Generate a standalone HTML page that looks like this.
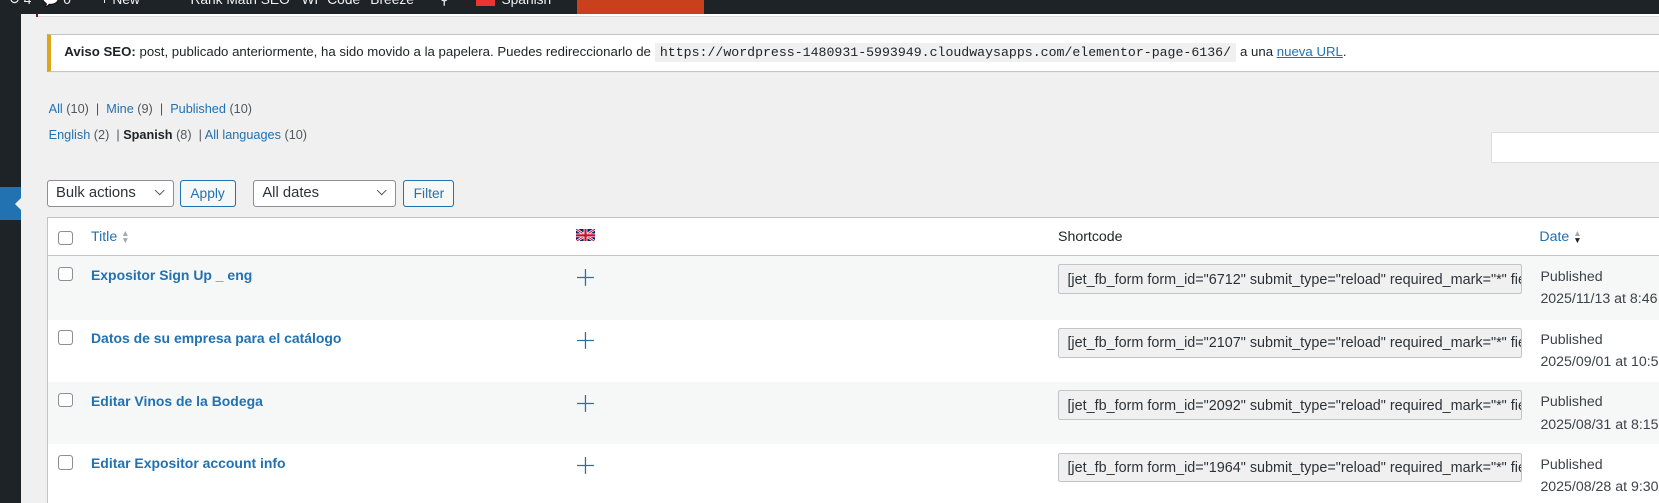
<!DOCTYPE html>
<html><head><meta charset="utf-8"><style>
*{box-sizing:border-box;margin:0;padding:0}
html,body{width:1659px;height:503px;overflow:hidden;background:#f0f0f1}
#wrap{zoom:1.058;width:1568px;height:475px;position:relative;overflow:hidden;font-family:"Liberation Sans",sans-serif;font-size:13px;color:#3c434a}
.abs{position:absolute}
a{color:#2271b1;text-decoration:none}
#bar{left:0;top:0;width:1659px;height:13px;background:#1d2327;overflow:hidden;color:#f0f0f1;font-size:13px}
#bar span{position:absolute;top:-8px;white-space:nowrap}
#side{left:0;top:13px;width:20px;height:462px;background:#1d2327}
.notice{left:44px;top:32px;width:1630px;height:36px;background:#fff;border:1px solid #c3c4c7;border-left:4px solid #dba617;box-shadow:0 1px 1px rgba(0,0,0,.04);padding:9px 12px 0 13px;font-size:12.5px;color:#1d2327;white-space:nowrap}
code{font-family:"Liberation Mono",monospace;background:#f0f0f1;padding:2px 5px;font-size:12.5px}
.sel{height:26px;border:1px solid #8c8f94;border-radius:3px;background:#fff;font-size:14px;color:#2c3338;padding:4px 8px}
.btn{height:26px;border:1px solid #2271b1;border-radius:3px;background:#f6f7f7;color:#2271b1;font-size:13px;padding:5px 9px}
.chev{position:absolute;right:9px;top:6px;width:7px;height:7px;border-right:1.3px solid #50575e;border-bottom:1.3px solid #50575e;transform:rotate(45deg)}
.cb{width:14px;height:14px;border:1px solid #8c8f94;border-radius:3px;background:#fff;position:absolute}
.row{position:absolute;left:45px;width:1614px;height:60px}
.t{position:absolute;left:41px;top:10px;font-weight:bold;color:#2271b1;font-size:13.2px}
.plus{position:absolute;left:500px;top:12px}
.sc{position:absolute;left:955px;top:8px;width:439px;height:28px;background:#f0f0f1;border:1px solid #c3c4c7;border-radius:2px;padding:6px 8px;font-size:13.6px;color:#2c3338;white-space:nowrap;overflow:hidden}
.dt{position:absolute;left:1411px;top:9px;font-size:13.4px;line-height:21px;color:#3c434a;white-space:nowrap}
</style></head><body><div id="wrap">
<div id="bar" class="abs">
<span style="left:8px">↻ 4</span><span style="left:40px">💬 0</span><span style="left:95px">+ New</span><span style="left:180px">Rank Math SEO</span><span style="left:285px">WP Code</span><span style="left:350px">Breeze</span><span style="left:415px">⚲</span>
<span style="left:450px;top:-6px;width:18px;height:12px;background:#e33"></span><span style="left:474px">Spanish</span>
<span style="left:545px;top:0;width:120px;height:13px;background:#c9401d"></span>
</div>
<div id="side" class="abs"></div>
<div class="abs" style="left:0;top:177px;width:20px;height:31px;background:#2271b1"></div>
<div class="abs" style="left:14px;top:187px;width:0;height:0;border-top:6px solid transparent;border-bottom:6px solid transparent;border-right:6px solid #f0f0f1"></div>
<div class="abs" style="left:34px;top:13px;width:2px;height:3px;background:#8a0b3a"></div>
<div class="abs" style="left:36px;top:13px;width:1630px;height:3px;background:#fff;border-bottom:1px solid #dcdcde"></div>
<div class="abs notice"><b>Aviso SEO:</b> post, publicado anteriormente, ha sido movido a la papelera. Puedes redireccionarlo de <code>https://wordpress-1480931-5993949.cloudwaysapps.com/elementor-page-6136/</code> a una <a href="#" style="text-decoration:underline">nueva URL</a>.</div>
<div class="abs" style="left:46px;top:96px;font-size:12px;color:#50575e"><a>All</a> (10) &nbsp;| &nbsp;<a>Mine</a> (9) &nbsp;| &nbsp;<a>Published</a> (10)</div>
<div class="abs" style="left:46px;top:121px;font-size:12px;color:#50575e"><a>English</a> (2) &nbsp;| <b style="color:#1d2327">Spanish</b> (8) &nbsp;| <a>All languages</a> (10)</div>
<div class="abs" style="left:1409px;top:125px;width:260px;height:29px;background:#fff;border:1px solid #dcdcde;border-radius:2px"></div>
<div class="abs sel" style="left:44px;top:170px;width:120px">Bulk actions<div class="chev"></div></div>
<div class="abs btn" style="left:170px;top:170px;width:53px">Apply</div>
<div class="abs sel" style="left:239px;top:170px;width:135px">All dates<div class="chev"></div></div>
<div class="abs btn" style="left:381px;top:170px;width:48px">Filter</div>
<div class="abs" style="left:44px;top:205px;width:1640px;height:290px;background:#fff;border:1px solid #c3c4c7"></div>
<div class="abs" style="left:45px;top:241px;width:1614px;height:1px;background:#c3c4c7"></div>
<div class="cb" style="left:55px;top:218px"></div>
<div class="abs" style="left:86px;top:216px;color:#2271b1;font-size:13.4px">Title <span style="color:#a7aaad;font-size:8px;display:inline-block;line-height:6px;vertical-align:middle">▲<br>▼</span></div>
<svg class="abs" style="left:544px;top:216px" width="18" height="12" viewBox="0 0 60 40"><rect width="60" height="40" fill="#012169"/><path d="M0,0 60,40M60,0 0,40" stroke="#fff" stroke-width="8"/><path d="M0,0 60,40M60,0 0,40" stroke="#C8102E" stroke-width="3"/><path d="M30,0v40M0,20h60" stroke="#fff" stroke-width="12"/><path d="M30,0v40M0,20h60" stroke="#C8102E" stroke-width="7"/></svg>
<div class="abs" style="left:1000px;top:216px;color:#1d2327;font-size:13.4px">Shortcode</div>
<div class="abs" style="left:1455px;top:216px;color:#2271b1;font-size:13.4px">Date <span style="font-size:8px;display:inline-block;line-height:6px;vertical-align:middle"><span style="color:#a7aaad">▲</span><br><span style="color:#1d2327">▼</span></span></div>

<div class="row" style="top:242px;background:#f6f7f7"><div class="cb" style="left:10px;top:10px"></div><div class="t">Expositor Sign Up _ eng</div><svg class="plus" width="16" height="16"><path d="M8 0v16M0 8h16" stroke="#2271b1" stroke-width="1.2"/></svg><div class="sc">[jet_fb_form form_id="6712" submit_type="reload" required_mark="*" fields_layout="column"]</div><div class="dt">Published<br>2025/11/13 at 8:46 am</div></div>
<div class="row" style="top:302px;background:#fff"><div class="cb" style="left:10px;top:10px"></div><div class="t">Datos de su empresa para el catálogo</div><svg class="plus" width="16" height="16"><path d="M8 0v16M0 8h16" stroke="#2271b1" stroke-width="1.2"/></svg><div class="sc">[jet_fb_form form_id="2107" submit_type="reload" required_mark="*" fields_layout="column"]</div><div class="dt">Published<br>2025/09/01 at 10:55 am</div></div>
<div class="row" style="top:361px;background:#f6f7f7"><div class="cb" style="left:10px;top:10px"></div><div class="t">Editar Vinos de la Bodega</div><svg class="plus" width="16" height="16"><path d="M8 0v16M0 8h16" stroke="#2271b1" stroke-width="1.2"/></svg><div class="sc">[jet_fb_form form_id="2092" submit_type="reload" required_mark="*" fields_layout="column"]</div><div class="dt">Published<br>2025/08/31 at 8:15 pm</div></div>
<div class="row" style="top:420px;background:#fff"><div class="cb" style="left:10px;top:10px"></div><div class="t">Editar Expositor account info</div><svg class="plus" width="16" height="16"><path d="M8 0v16M0 8h16" stroke="#2271b1" stroke-width="1.2"/></svg><div class="sc">[jet_fb_form form_id="1964" submit_type="reload" required_mark="*" fields_layout="column"]</div><div class="dt">Published<br>2025/08/28 at 9:30 pm</div></div>
</div></body></html>
